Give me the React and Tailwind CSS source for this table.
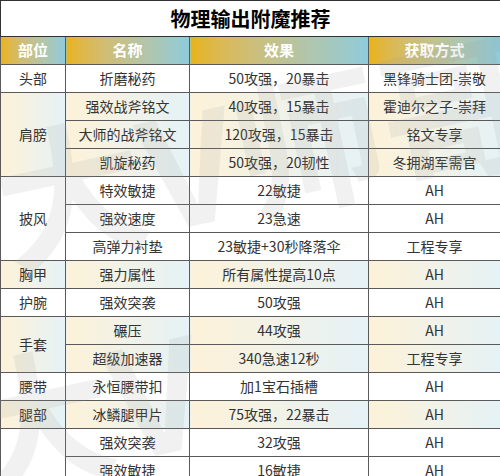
import React from 'react';

const groups = [
  { part: '头部', rows: [['折磨秘药', '50攻强，20暴击', '黑锋骑士团-崇敬']] },
  {
    part: '肩膀',
    rows: [
      ['强效战斧铭文', '40攻强，15暴击', '霍迪尔之子-崇拜'],
      ['大师的战斧铭文', '120攻强，15暴击', '铭文专享'],
      ['凯旋秘药', '50攻强，20韧性', '冬拥湖军需官'],
    ],
  },
  {
    part: '披风',
    rows: [
      ['特效敏捷', '22敏捷', 'AH'],
      ['强效速度', '23急速', 'AH'],
      ['高弹力衬垫', '23敏捷+30秒降落伞', '工程专享'],
    ],
  },
  { part: '胸甲', rows: [['强力属性', '所有属性提高10点', 'AH']] },
  { part: '护腕', rows: [['强效突袭', '50攻强', 'AH']] },
  {
    part: '手套',
    rows: [
      ['碾压', '44攻强', 'AH'],
      ['超级加速器', '340急速12秒', '工程专享'],
    ],
  },
  { part: '腰带', rows: [['永恒腰带扣', '加1宝石插槽', 'AH']] },
  { part: '腿部', rows: [['冰鳞腿甲片', '75攻强，22暴击', 'AH']] },
  {
    part: '',
    rows: [
      ['强效突袭', '32攻强', 'AH'],
      ['强效敏捷', '16敏捷', 'AH'],
    ],
  },
];

const headers = ['部位', '名称', '效果', '获取方式'];

const cellBase = 'border border-[#5a5a5a] text-center align-middle text-[14px] text-[#333] h-[28px] p-0';
const tint = 'bg-gradient-to-r from-[#fdf2d8] to-[#e5f2f6]';

const App = () => (
  <div
    className="relative w-[500px] h-[476px] overflow-hidden bg-white"
    style={{ fontFamily: '"Noto Sans CJK SC", "Noto Sans", sans-serif' }}
  >
    <table className="w-[500px] table-fixed border-collapse">
      <colgroup>
        <col className="w-[65px]" />
        <col className="w-[124px]" />
        <col className="w-[179px]" />
        <col className="w-[132px]" />
      </colgroup>
      <tbody>
        <tr>
          <td
            colSpan={4}
            className="border border-[#333] h-[36px] text-center text-[20px] font-bold text-black p-0 leading-none"
          >
            物理输出附魔推荐
          </td>
        </tr>
        <tr>
          {headers.map((h) => (
            <td
              key={h}
              className="border border-[#5a5a5a] h-[28px] p-0 text-center text-[15px] font-bold text-white bg-gradient-to-r from-[#e8b30f] to-[#8ecbdc]"
            >
              {h}
            </td>
          ))}
        </tr>
        {groups.map((g, gi) => {
          const tinted = gi % 2 === 1;
          return g.rows.map((r, ri) => (
            <tr key={`${gi}-${ri}`}>
              {ri === 0 && (
                <td rowSpan={g.rows.length} className={`${cellBase} ${tinted ? tint : 'bg-white'}`}>
                  {g.part}
                </td>
              )}
              {r.map((c, ci) => (
                <td key={ci} className={`${cellBase} ${tinted ? tint : 'bg-white'}`}>
                  {c}
                </td>
              ))}
            </tr>
          ));
        })}
      </tbody>
    </table>
    {/* watermark */}
    <div className="pointer-events-none absolute left-[-10px] top-[70px] rotate-[-12deg] text-[150px] font-bold leading-none text-[#9a9a9a] opacity-[0.13] whitespace-nowrap">
      大V师哥
    </div>
    <div className="pointer-events-none absolute left-[-40px] top-[330px] rotate-[-12deg] text-[150px] font-bold leading-none text-[#9a9a9a] opacity-[0.13] whitespace-nowrap">
      大V
    </div>
  </div>
);

export default App;
